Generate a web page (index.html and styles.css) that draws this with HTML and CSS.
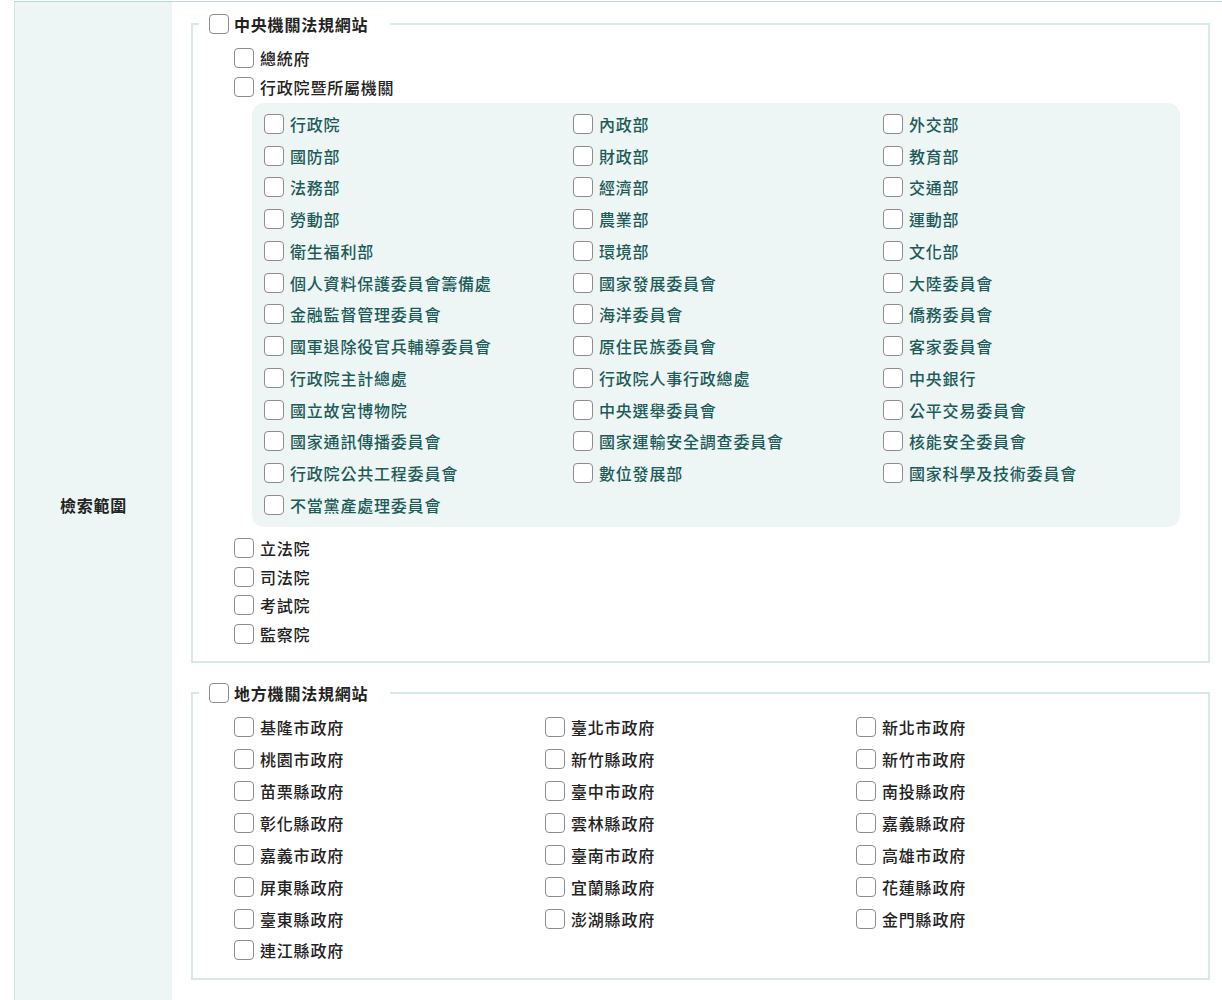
FILE: index.html
```html
<!DOCTYPE html>
<html lang="zh-Hant">
<head>
<meta charset="UTF-8" />
<meta name="viewport" content="width=device-width, initial-scale=1" />
<title>檢索範圍</title>
<link rel="stylesheet" href="styles.css">
</head>
<body>
  <div class="search-row">
    <div class="row-label">檢索範圍</div>
    <div class="row-body">

      <fieldset class="scope">
        <legend><label class="check"><input type="checkbox"><span>中央機關法規網站</span></label></legend>
        <div class="list">
          <label class="item"><input type="checkbox"><span>總統府</span></label>
          <label class="item"><input type="checkbox"><span>行政院暨所屬機關</span></label>

          <div class="panel">
            <label class="sub"><input type="checkbox"><span>行政院</span></label>
            <label class="sub"><input type="checkbox"><span>內政部</span></label>
            <label class="sub"><input type="checkbox"><span>外交部</span></label>
            <label class="sub"><input type="checkbox"><span>國防部</span></label>
            <label class="sub"><input type="checkbox"><span>財政部</span></label>
            <label class="sub"><input type="checkbox"><span>教育部</span></label>
            <label class="sub"><input type="checkbox"><span>法務部</span></label>
            <label class="sub"><input type="checkbox"><span>經濟部</span></label>
            <label class="sub"><input type="checkbox"><span>交通部</span></label>
            <label class="sub"><input type="checkbox"><span>勞動部</span></label>
            <label class="sub"><input type="checkbox"><span>農業部</span></label>
            <label class="sub"><input type="checkbox"><span>運動部</span></label>
            <label class="sub"><input type="checkbox"><span>衛生福利部</span></label>
            <label class="sub"><input type="checkbox"><span>環境部</span></label>
            <label class="sub"><input type="checkbox"><span>文化部</span></label>
            <label class="sub"><input type="checkbox"><span>個人資料保護委員會籌備處</span></label>
            <label class="sub"><input type="checkbox"><span>國家發展委員會</span></label>
            <label class="sub"><input type="checkbox"><span>大陸委員會</span></label>
            <label class="sub"><input type="checkbox"><span>金融監督管理委員會</span></label>
            <label class="sub"><input type="checkbox"><span>海洋委員會</span></label>
            <label class="sub"><input type="checkbox"><span>僑務委員會</span></label>
            <label class="sub"><input type="checkbox"><span>國軍退除役官兵輔導委員會</span></label>
            <label class="sub"><input type="checkbox"><span>原住民族委員會</span></label>
            <label class="sub"><input type="checkbox"><span>客家委員會</span></label>
            <label class="sub"><input type="checkbox"><span>行政院主計總處</span></label>
            <label class="sub"><input type="checkbox"><span>行政院人事行政總處</span></label>
            <label class="sub"><input type="checkbox"><span>中央銀行</span></label>
            <label class="sub"><input type="checkbox"><span>國立故宮博物院</span></label>
            <label class="sub"><input type="checkbox"><span>中央選舉委員會</span></label>
            <label class="sub"><input type="checkbox"><span>公平交易委員會</span></label>
            <label class="sub"><input type="checkbox"><span>國家通訊傳播委員會</span></label>
            <label class="sub"><input type="checkbox"><span>國家運輸安全調查委員會</span></label>
            <label class="sub"><input type="checkbox"><span>核能安全委員會</span></label>
            <label class="sub"><input type="checkbox"><span>行政院公共工程委員會</span></label>
            <label class="sub"><input type="checkbox"><span>數位發展部</span></label>
            <label class="sub"><input type="checkbox"><span>國家科學及技術委員會</span></label>
            <label class="sub"><input type="checkbox"><span>不當黨產處理委員會</span></label>
          </div>

          <label class="item short"><input type="checkbox"><span>立法院</span></label>
          <label class="item short"><input type="checkbox"><span>司法院</span></label>
          <label class="item short"><input type="checkbox"><span>考試院</span></label>
          <label class="item short"><input type="checkbox"><span>監察院</span></label>
        </div>
      </fieldset>

      <fieldset class="scope local">
        <legend><label class="check"><input type="checkbox"><span>地方機關法規網站</span></label></legend>
        <div class="list grid-local">
          <label class="item"><input type="checkbox"><span>基隆市政府</span></label>
          <label class="item"><input type="checkbox"><span>臺北市政府</span></label>
          <label class="item"><input type="checkbox"><span>新北市政府</span></label>
          <label class="item"><input type="checkbox"><span>桃園市政府</span></label>
          <label class="item"><input type="checkbox"><span>新竹縣政府</span></label>
          <label class="item"><input type="checkbox"><span>新竹市政府</span></label>
          <label class="item"><input type="checkbox"><span>苗栗縣政府</span></label>
          <label class="item"><input type="checkbox"><span>臺中市政府</span></label>
          <label class="item"><input type="checkbox"><span>南投縣政府</span></label>
          <label class="item"><input type="checkbox"><span>彰化縣政府</span></label>
          <label class="item"><input type="checkbox"><span>雲林縣政府</span></label>
          <label class="item"><input type="checkbox"><span>嘉義縣政府</span></label>
          <label class="item"><input type="checkbox"><span>嘉義市政府</span></label>
          <label class="item"><input type="checkbox"><span>臺南市政府</span></label>
          <label class="item"><input type="checkbox"><span>高雄市政府</span></label>
          <label class="item"><input type="checkbox"><span>屏東縣政府</span></label>
          <label class="item"><input type="checkbox"><span>宜蘭縣政府</span></label>
          <label class="item"><input type="checkbox"><span>花蓮縣政府</span></label>
          <label class="item"><input type="checkbox"><span>臺東縣政府</span></label>
          <label class="item"><input type="checkbox"><span>澎湖縣政府</span></label>
          <label class="item"><input type="checkbox"><span>金門縣政府</span></label>
          <label class="item"><input type="checkbox"><span>連江縣政府</span></label>
        </div>
      </fieldset>

    </div>
  </div>
</body>
</html>
```

FILE: styles.css
```css
body {
  margin: 0;
  background-color: #fff;
  color: #222;
  font-family: "Noto Sans CJK TC", "Noto Sans", sans-serif;
  font-size: 16px;
  font-weight: 500;
  letter-spacing: 0.05em;
}
.search-row {
  display: flex;
  margin: 1px 0 0 14px;
  border-top: 1px solid #b8dada;
}
.row-label {
  width: 157px;
  flex-shrink: 0;
  display: flex;
  align-items: center;
  justify-content: center;
  background-color: #edf6f5;
  border-left: 1px solid #d2e4e4;
  font-weight: bold;
  color: #222;
}
.row-body {
  flex: 1;
  padding: 10px 12px 28px 19px;
}
.scope {
  margin: 0;
  padding: 7px 28px 13.5px 6px;
  border: 2px solid #d9e9e9;
  min-width: 0;
}
.scope.local {
  margin-top: 18px;
  padding-top: 6px;
  padding-bottom: 12px;
}
legend {
  padding: 0 22px 0 10px;
  line-height: 24px;
}
input[type="checkbox"] {
  appearance: none;
  -webkit-appearance: none;
  width: 20px;
  height: 20px;
  margin: 0;
  flex-shrink: 0;
  background-color: #fff;
  border: 1px solid #8c8c8c;
  border-radius: 4px;
}
.check {
  display: flex;
  align-items: center;
  gap: 5px;
  font-weight: bold;
}
.list {
  padding-left: 35px;
}
.item {
  display: flex;
  align-items: center;
  gap: 6px;
  height: 29px;
}
.item.short {
  height: 28.5px;
}
.panel {
  display: grid;
  grid-template-columns: 309px 310px 1fr;
  grid-auto-rows: 31.75px;
  margin: 2px 0 7px 18px;
  padding: 5px 12px 6px;
  background-color: #edf6f5;
  border-radius: 12px;
}
.sub {
  display: flex;
  align-items: center;
  gap: 6px;
  color: #1d5b59;
}
.grid-local {
  display: grid;
  grid-template-columns: 311px 311px 1fr;
}
.grid-local .item {
  height: 31.9px;
}
```
